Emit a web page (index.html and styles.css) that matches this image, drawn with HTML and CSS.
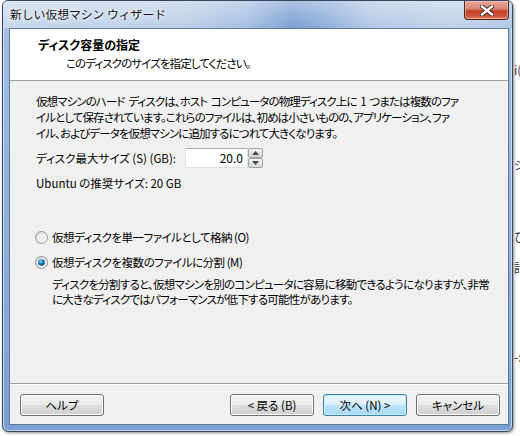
FILE: index.html
```html
<!DOCTYPE html>
<html lang="ja">
<head>
<meta charset="utf-8">
<title>新しい仮想マシン ウィザード</title>
<link rel="stylesheet" href="styles.css">
</head>
<body>
<div class="desktop">
  <div class="window">
    <div class="titlebar">
      <span class="title">新しい仮想マシン ウィザード</span>
      <div class="close">
        <svg width="14" height="11" viewBox="0 0 14 11"><path d="M2 1.5 L12 9.5 M12 1.5 L2 9.5" stroke="#3a1a16" stroke-width="4.2" stroke-linecap="square"/><path d="M2 1.5 L12 9.5 M12 1.5 L2 9.5" stroke="#ffffff" stroke-width="2.4" stroke-linecap="square"/></svg>
      </div>
    </div>
    <div class="client">
      <div class="header">
        <div class="h-title">ディスク容量の指定</div>
        <div class="h-sub">このディスクのサイズを指定してください。</div>
      </div>
      <div class="body">
        <p class="intro">仮想マシンのハード ディスクは、ホスト コンピュータの物理ディスク上に 1 つまたは複数のファ<br>イルとして保存されています。これらのファイルは、初めは小さいものの、アプリケーション、ファ<br>イル、およびデータを仮想マシンに追加するにつれて大きくなります。</p>
        <div class="size-row">
          <span class="label">ディスク最大サイズ (S) (GB):</span>
          <div class="spin">
            <div class="spin-input">20.0</div>
            <div class="spin-btns">
              <div class="sb"><svg width="7" height="4" viewBox="0 0 7 4"><path d="M0 4 L3.5 0 L7 4 Z" fill="#4a4a4a"/></svg></div>
              <div class="sb"><svg width="7" height="4" viewBox="0 0 7 4"><path d="M0 0 L3.5 4 L7 0 Z" fill="#4a4a4a"/></svg></div>
            </div>
          </div>
        </div>
        <div class="rec">Ubuntu の推奨サイズ: 20 GB</div>
        <div class="radio first">
          <svg width="13" height="13" viewBox="0 0 13 13">
            <defs><linearGradient id="rg" x1="0" y1="0" x2="1" y2="1"><stop offset="0" stop-color="#d4d4d4"/><stop offset="1" stop-color="#fbfbfb"/></linearGradient></defs>
            <circle cx="6.5" cy="6.5" r="6" fill="url(#rg)" stroke="#9a9a9a"/>
            <circle cx="6.5" cy="6.5" r="3.6" fill="#ececec"/>
          </svg>
          <span>仮想ディスクを単一ファイルとして格納 (O)</span>
        </div>
        <div class="radio">
          <svg width="13" height="13" viewBox="0 0 13 13">
            <defs><radialGradient id="dot" cx="0.4" cy="0.35" r="0.7"><stop offset="0" stop-color="#8fd3f7"/><stop offset="0.5" stop-color="#1a7fc4"/><stop offset="1" stop-color="#0d3f6b"/></radialGradient></defs>
            <circle cx="6.5" cy="6.5" r="6" fill="url(#rg)" stroke="#8e8f8f"/>
            <circle cx="6.5" cy="6.5" r="3.3" fill="url(#dot)"/>
          </svg>
          <span>仮想ディスクを複数のファイルに分割 (M)</span>
        </div>
        <p class="desc">ディスクを分割すると、仮想マシンを別のコンピュータに容易に移動できるようになりますが、非常<br>に大きなディスクではパフォーマンスが低下する可能性があります。</p>
      </div>
      <div class="footer">
        <div class="btn">ヘルプ</div>
        <div class="spacer"></div>
        <div class="btn">&lt; 戻る (B)</div>
        <div class="btn default">次へ (N) &gt;</div>
        <div class="btn">キャンセル</div>
      </div>
    </div>
  </div>
  <span class="frag f1">i(</span>
  <span class="frag f2">ジ</span>
  <span class="frag f3">ひ</span>
  <span class="frag f4">計</span>
  <span class="frag f5">-:</span>
</div>
</body>
</html>
```

FILE: styles.css
```css
html, body {
  margin: 0;
  padding: 0;
}

body {
  width: 520px;
  height: 436px;
  overflow: hidden;
  background: #ffffff;
  font-family: "Noto Sans CJK JP", "Noto Sans", sans-serif;
  font-size: 12px;
  color: #000;
}

.desktop {
  position: relative;
  width: 520px;
  height: 436px;
  overflow: hidden;
}

.window {
  box-sizing: border-box;
  margin-left: 2px;
  width: 511px;
  height: 432px;
  border: 1px solid #34475f;
  border-radius: 6px;
  background: linear-gradient(180deg, #bcd1ec 0px, #a0bce2 40px, #8eb0dc 50%, #7a9fd3 100%);
  box-shadow: inset 0 0 0 1px rgba(255, 255, 255, 0.55), 1px 1px 3px rgba(0, 0, 0, 0.45);
  display: flex;
  flex-direction: column;
}

.titlebar {
  height: 27px;
  display: flex;
  align-items: flex-start;
  border-radius: 5px 5px 0 0;
  background:
    linear-gradient(180deg, rgba(255,255,255,0.35) 0%, rgba(255,255,255,0) 100%),
    linear-gradient(90deg, #c6d7ec 0%, #bccfe8 35%, #a5bfe2 48%, #7c9fd2 57%, #8aabd9 62%, #b2c8e6 72%, #bfd2ea 88%, #b1c8e5 100%);
}

.title {
  margin: 5px 0 0 7px;
  line-height: 16px;
  font-size: 11.8px;
  color: #101010;
  text-shadow: 0 0 6px rgba(255, 255, 255, 0.9), 0 0 3px rgba(255, 255, 255, 0.9);
}

.close {
  margin-left: auto;
  margin-right: 3px;
  margin-top: 0;
  box-sizing: border-box;
  width: 45px;
  height: 19px;
  border: 1px solid #5b231c;
  border-top: none;
  border-radius: 0 0 4px 4px;
  background: linear-gradient(180deg, #e9a99c 0%, #d7826f 45%, #c2402a 55%, #cc5a3f 85%, #e08a6e 100%);
  box-shadow: inset 0 0 0 1px rgba(255, 210, 200, 0.5);
  display: flex;
  align-items: center;
  justify-content: center;
}

.client {
  margin: 0 3px 0 6px;
  border: 1px solid #62799b;
  height: 395px;
  display: flex;
  flex-direction: column;
  background: #f0f0f0;
}

.header {
  height: 51px;
  background: #ffffff;
  border-bottom: 1px solid #a0a0a0;
  padding: 0;
}

.h-title {
  margin: 8px 0 0 28px;
  line-height: 16px;
  font-weight: bold;
  font-feature-settings: "palt";
}

.h-sub {
  margin: 2px 0 0 56px;
  line-height: 16px;
  font-size: 11.5px;
  letter-spacing: -0.9px;
  font-feature-settings: "palt";
}

.body {
  height: 303px;
  padding: 12px 0 0 26px;
  box-sizing: border-box;
  border-bottom: 1px solid #a0a0a0;
  font-size: 11.5px;
  font-feature-settings: "palt";
  white-space: nowrap;
}

.intro {
  margin: 0;
  line-height: 16px;
  letter-spacing: -0.9px;
  word-spacing: 2px;
}

.size-row {
  margin-top: 7px;
  height: 20px;
  display: flex;
  align-items: center;
}

.label {
  width: 149px;
  line-height: 16px;
}

.spin {
  display: flex;
  height: 20px;
}

.spin-input {
  box-sizing: border-box;
  width: 63px;
  height: 20px;
  border: 1px solid #dbdfe6;
  border-top-color: #abadb3;
  border-left-color: #e2e3ea;
  background: #fff;
  text-align: right;
  padding-right: 4px;
  line-height: 18px;
  font-size: 12px;
}

.spin-btns {
  display: flex;
  flex-direction: column;
  width: 15px;
}

.sb {
  box-sizing: border-box;
  height: 10px;
  border: 1px solid #a3a3a3;
  border-radius: 2px;
  background: linear-gradient(180deg, #f6f6f6 0%, #e4e4e4 50%, #d6d6d6 100%);
  display: flex;
  align-items: center;
  justify-content: center;
}

.rec {
  margin-top: 7px;
  line-height: 16px;
}

.radio {
  display: flex;
  align-items: center;
  height: 16px;
  margin-top: 9px;
  margin-left: -1px;
  letter-spacing: -0.5px;
}

.radio.first {
  margin-top: 38px;
}

.radio svg {
  margin-right: 4px;
  flex: none;
}

.desc {
  margin: 7px 0 0 16px;
  line-height: 15px;
  letter-spacing: -0.75px;
}

.footer {
  box-sizing: border-box;
  flex: 1;
  border-top: 1px solid #ffffff;
  display: flex;
  padding: 9px 8px 0 10px;
  gap: 9px;
  align-items: flex-start;
}

.spacer {
  flex: 1;
}

.btn {
  box-sizing: border-box;
  width: 84px;
  height: 22px;
  border: 1px solid #707070;
  border-radius: 3px;
  background: linear-gradient(180deg, #f2f2f2 0%, #ebebeb 50%, #dddddd 51%, #cfcfcf 100%);
  box-shadow: inset 0 0 0 1px #fbfbfb;
  text-align: center;
  line-height: 20px;
  font-size: 11.5px;
  font-feature-settings: "palt";
  white-space: nowrap;
}

.btn.default {
  border-color: #3c7fb1;
  background: linear-gradient(180deg, #eaf6fd 0%, #d9f0fc 50%, #bee6fd 51%, #a7d9f5 100%);
  box-shadow: inset 0 0 0 1px #c7ecfd;
}

.frag {
  position: absolute;
  left: 514px;
  font-size: 12px;
  line-height: 14px;
  color: #333;
}

.f1 { top: 63px; }
.f2 { top: 158px; }
.f3 { top: 230px; }
.f4 { top: 261px; }
.f5 { top: 350px; }
```
